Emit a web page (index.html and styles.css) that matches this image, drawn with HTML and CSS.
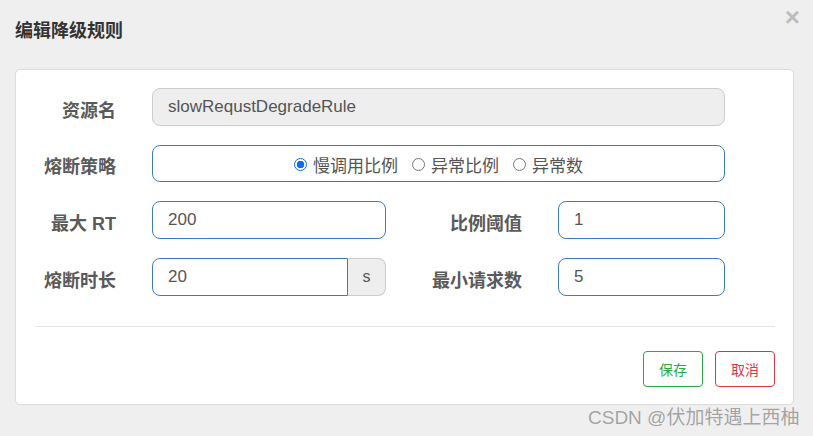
FILE: index.html
```html
<!DOCTYPE html>
<html lang="zh">
<head>
<meta charset="utf-8">
<link rel="stylesheet" href="styles.css">
</head>
<body>
<div class="dialog">
  <div class="header">
    <h4 class="title">编辑降级规则</h4>
    <span class="close">×</span>
  </div>
  <div class="card">
    <div class="row">
      <label class="lbl">资源名</label>
      <div class="field wide disabled">slowRequstDegradeRule</div>
    </div>
    <div class="row">
      <label class="lbl">熔断策略</label>
      <div class="field wide radios">
        <span class="opt"><span class="radio on"></span>慢调用比例</span>
        <span class="opt"><span class="radio"></span>异常比例</span>
        <span class="opt"><span class="radio"></span>异常数</span>
      </div>
    </div>
    <div class="row">
      <label class="lbl">最大 RT</label>
      <div class="field half">200</div>
      <label class="lbl lbl2">比例阈值</label>
      <div class="field small">1</div>
    </div>
    <div class="row">
      <label class="lbl">熔断时长</label>
      <div class="group">
        <div class="field grp">20</div>
        <div class="addon">s</div>
      </div>
      <label class="lbl lbl2">最小请求数</label>
      <div class="field small">5</div>
    </div>
    <div class="divider"></div>
    <div class="actions">
      <button class="btn save">保存</button>
      <button class="btn cancel">取消</button>
    </div>
  </div>
  <div class="watermark">CSDN @伏加特遇上西柚</div>
</div>
</body>
</html>
```
FILE: styles.css
```css
html, body {
  margin: 0;
  padding: 0;
}
body {
  background: #efefef;
  font-family: "Liberation Sans", Arial, "Noto Sans CJK SC", sans-serif;
  width: 813px;
  height: 436px;
  overflow: hidden;
}
.dialog {
  position: relative;
  width: 813px;
  height: 436px;
}
.header {
  height: 69px;
  padding-left: 15px;
  box-sizing: border-box;
  position: relative;
}
.title {
  margin: 0;
  padding-top: 20px;
  font-size: 18px;
  line-height: 22px;
  font-weight: bold;
  color: #333;
}
.close {
  position: absolute;
  right: 13px;
  top: 3px;
  font-size: 26px;
  font-weight: bold;
  color: #bdbdbd;
  line-height: 28px;
}
.card {
  margin-left: 15px;
  width: 779px;
  height: 336px;
  box-sizing: border-box;
  background: #fff;
  border: 1px solid #dcdcdc;
  border-radius: 5px;
  padding-top: 18px;
}
.row {
  display: flex;
  align-items: center;
  height: 38px;
  margin-bottom: 19px;
}
.row:nth-child(2) { height: 37px; }
.lbl {
  width: 100px;
  margin-right: 36px;
  padding-top: 3px;
  text-align: right;
  font-size: 18px;
  font-weight: bold;
  color: #5a5a5a;
}
.lbl2 {
  width: 136px;
  margin-right: 36px;
}
.field {
  height: 100%;
  box-sizing: border-box;
  border: 1px solid #3a7cbf;
  border-radius: 8px;
  padding-left: 15px;
  display: flex;
  align-items: center;
  font-size: 17px;
  color: #555;
}
.wide { width: 573px; }
.half { width: 234px; }
.small { width: 167px; }
.disabled {
  background: #eeeeee;
  border-color: #cccccc;
}
.radios {
  justify-content: center;
  padding-left: 0;
  gap: 14px;
  color: #555;
  padding-top: 2px;
}
.opt {
  display: flex;
  align-items: center;
}
.radio {
  width: 11px;
  height: 11px;
  border: 1px solid #767676;
  border-radius: 50%;
  margin-right: 6px;
  box-sizing: content-box;
}
.radio.on {
  border-color: #0a6cf5;
  background: radial-gradient(circle, #0a6cf5 0 3.5px, #fff 4px);
}
.group {
  display: flex;
  width: 234px;
  height: 100%;
}
.grp {
  width: 196px;
  border-radius: 8px 0 0 8px;
}
.addon {
  width: 38px;
  box-sizing: border-box;
  background: #eeeeee;
  border: 1px solid #cccccc;
  border-left: none;
  border-radius: 0 8px 8px 0;
  display: flex;
  align-items: center;
  justify-content: center;
  font-size: 16px;
  color: #555;
}
.divider {
  margin: 30px 18px 0 19px;
  border-top: 1px solid #e5e5e5;
}
.actions {
  display: flex;
  justify-content: flex-end;
  gap: 12px;
  padding: 24px 18px 0 0;
}
.btn {
  width: 60px;
  height: 36px;
  background: #fff;
  border-radius: 4px;
  font-family: "Noto Sans CJK SC", sans-serif;
  font-size: 14px;
  padding: 0;
}
.save {
  border: 1px solid #28a745;
  color: #28a745;
}
.cancel {
  border: 1px solid #dc3545;
  color: #dc3545;
}
.watermark {
  position: absolute;
  left: 588px;
  top: 402px;
  font-size: 19px;
  color: #a3a3a3;
  text-shadow: 0 0 1px #fff;
  white-space: nowrap;
}
```
